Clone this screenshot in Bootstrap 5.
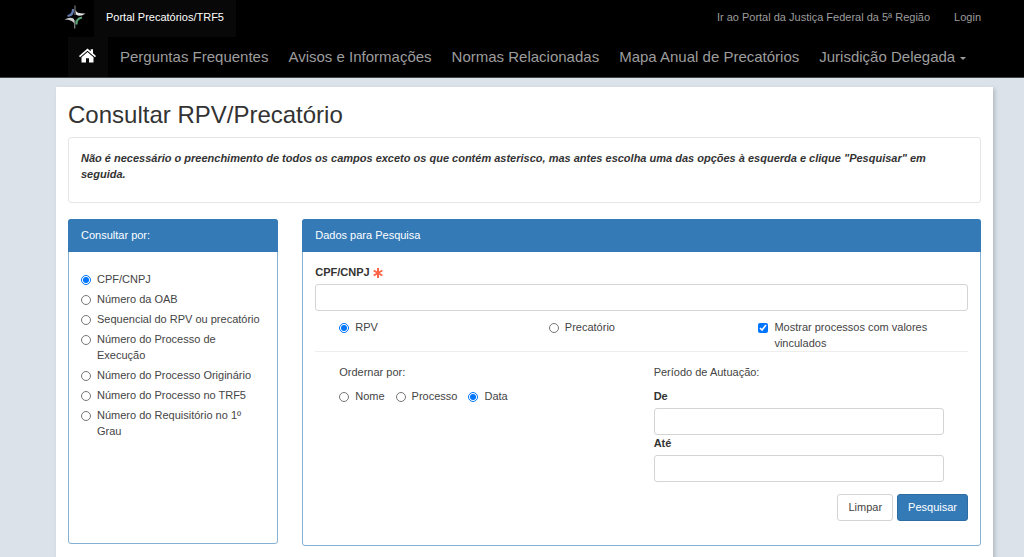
<!DOCTYPE html>
<html lang="pt-br">
<head>
<meta charset="utf-8">
<meta name="viewport" content="width=device-width, initial-scale=1">
<title>Portal Precatórios/TRF5</title>
<link href="https://cdn.jsdelivr.net/npm/bootstrap@5.3.0/dist/css/bootstrap.min.css" rel="stylesheet">
<style>
  body { font-family: "Liberation Sans", Arial, sans-serif; font-size: 11px; line-height: 16px; color: #444; background: #dbe2e9; }
  .page-frame { margin-left: 56px; margin-right: 31px; }
  .site-header { background: #000; border-bottom: 1px solid #444; }
  .site-header a { color: #9d9d9d; text-decoration: none; display: block; padding: 0 12px; white-space: nowrap; }
  .site-header a:hover, .site-header a.current { color: #fff; }
  .site-header a.current { background: #080808; }
  .top-links a { line-height: 34px; padding-bottom: 3px; }
  .top-links .brand-link { padding: 5px 8px 0; }
  .top-links svg { display: block; }
  .main-links { padding-left: 12px; }
  .main-links a { font-size: 15px; line-height: 40px; padding: 0 10px; }
  .main-links a.current { padding: 0 12px 0 11px; margin-right: 2px; }
  .main-links svg { display: block; margin: 10px 0; }
  .main-links .dropdown-toggle::after { border-top-width: 3px; border-left-width: 3px; border-right-width: 3px; vertical-align: 2px; margin-left: 5px; }
  .sheet { background: #fff; box-shadow: 2px 2px 4px #b4bac2; margin-top: 9px; padding: 11px 12px 16px; }
  h1 { font-size: 24px; line-height: 34px; margin: 0 0 5px; color: #333; }
  .notice { border: 1px solid #e3e5e7; border-radius: 3px; padding: 12px 12px 20px; margin-bottom: 16px; color: #333; }
  .panel-box { border: 1px solid #86afd4; border-radius: 3px; background: #fff; }
  .panel-title { background: #337ab7; color: #fff; margin: -1px -1px 0; padding: 8px 13px 9px; border-radius: 3px 3px 0 0; font-size: 11px; line-height: 16px; }
  .side-body { padding: 19px 12px; min-height: 291px; }
  .form-body { padding: 12px 12px 24px; }
  .choice { display: flex; align-items: flex-start; gap: 6px; margin-bottom: 4px; }
  .choice input { width: 10px; height: 10px; margin: 4px 0 0; flex: none; accent-color: #0075ff; }
  .order-choices { gap: 11px; }
  .field { display: block; width: 100%; height: 27px; border: 1px solid #d4d4d4; border-radius: 3px; padding: 4px 8px; }
  .form-label { font-size: 11px; font-weight: bold; color: #333; margin: 0; }
  .rule { border-top: 1px solid #eee; margin-bottom: 12px; }
  .btn { font-size: 11px; line-height: 17px; padding: 4px 10px; border-radius: 3px; }
  .btn-clear { border-color: #d4d4d4; color: #444; background: #fff; }
  .btn-search { background: #337ab7; border-color: #2e6da4; color: #fff; }
</style>
</head>
<body>
<header class="site-header">
  <div class="page-frame">
    <nav class="top-links d-flex" aria-label="Portal">
      <a class="brand-link" href="#" aria-label="TRF5">
        <svg width="22" height="24" viewBox="0 0 22 24" fill="none" aria-hidden="true">
          <path d="M11 .5V10" stroke="#777" stroke-width="1.2"/>
          <path d="M9 4Q9.500 10 3.500 11" stroke="#6078ad" stroke-width="2.2"/>
          <path d="M11.500 5Q12.500 9 21.500 8.500Q16 12.500 12 9.500Z" fill="#e5e5e5"/>
          <path d="M.5 14.500Q6.500 11.500 10 14L10.500 19Q8.500 14.500 .5 14.500Z" fill="#cecece"/>
          <path d="M12.500 19.500Q12 13.500 18 12.500" stroke="#58a577" stroke-width="2.200"/>
          <path d="M10.700 15V23.500" stroke="#888" stroke-width="1.200"/>
        </svg>
      </a>
      <a class="current" href="#">Portal Precatórios/TRF5</a>
      <a class="ms-auto" href="#">Ir ao Portal da Justiça Federal da 5ª Região</a>
      <a href="#">Login</a>
    </nav>
    <nav class="main-links d-flex" aria-label="Principal">
      <a class="current" href="#" aria-label="Início">
        <svg width="17" height="19" viewBox="0 0 17 19" fill="#fff" aria-hidden="true">
          <path d="M8.500 1.500L0 9L1 10.200L8.500 3.700L16 10.200L17 9L14 6.200V2.200H11.700V4.300Z"/>
          <path d="M8.500 5L2.500 10.300V15.500H7V11.300H10V15.500H14.500V10.300Z"/>
        </svg>
      </a>
      <a href="#">Perguntas Frequentes</a>
      <a href="#">Avisos e Informações</a>
      <a href="#">Normas Relacionadas</a>
      <a href="#">Mapa Anual de Precatórios</a>
      <a class="dropdown-toggle" href="#" role="button" data-bs-toggle="dropdown">Jurisdição Delegada</a>
    </nav>
  </div>
</header>
<main class="page-frame sheet">
  <h1>Consultar RPV/Precatório</h1>
  <div class="notice fw-bold fst-italic">Não é necessário o preenchimento de todos os campos exceto os que contém asterisco, mas antes escolha uma das opções à esquerda e clique "Pesquisar" em seguida.</div>
  <form class="row align-items-start">
    <div class="col-3">
      <section class="panel-box">
        <h2 class="panel-title fw-normal">Consultar por:</h2>
        <div class="side-body">
          <label class="choice"><input type="radio" name="tipo" checked>CPF/CNPJ</label>
          <label class="choice"><input type="radio" name="tipo">Número da OAB</label>
          <label class="choice"><input type="radio" name="tipo">Sequencial do RPV ou precatório</label>
          <label class="choice"><input type="radio" name="tipo">Número do Processo de Execução</label>
          <label class="choice"><input type="radio" name="tipo">Número do Processo Originário</label>
          <label class="choice"><input type="radio" name="tipo">Número do Processo no TRF5</label>
          <label class="choice"><input type="radio" name="tipo">Número do Requisitório no 1º Grau</label>
        </div>
      </section>
    </div>
    <div class="col-9">
      <section class="panel-box">
        <h2 class="panel-title fw-normal">Dados para Pesquisa</h2>
        <div class="form-body">
          <label class="form-label d-block" for="cpf">CPF/CNPJ
            <svg width="10" height="10" viewBox="0 0 10 10" stroke="#ff6347" stroke-width="2" aria-hidden="true"><path d="M5 0V10M.7 2.500L9.300 7.500M9.300 2.500L.7 7.500"/></svg>
          </label>
          <input class="field mt-1" id="cpf" type="text">
          <div class="px-4 pt-2">
            <div class="row">
              <div class="col-4"><label class="choice mb-0"><input type="radio" name="req" checked>RPV</label></div>
              <div class="col-4"><label class="choice mb-0"><input type="radio" name="req">Precatório</label></div>
              <div class="col-4"><label class="choice mb-0"><input type="checkbox" checked>Mostrar processos com valores vinculados</label></div>
            </div>
          </div>
          <div class="rule"></div>
          <div class="px-4">
            <div class="row">
              <div class="col-6">
                <div class="mb-2">Ordernar por:</div>
                <div class="d-flex order-choices">
                  <label class="choice"><input type="radio" name="ordem">Nome</label>
                  <label class="choice"><input type="radio" name="ordem">Processo</label>
                  <label class="choice"><input type="radio" name="ordem" checked>Data</label>
                </div>
              </div>
              <div class="col-6">
                <div class="mb-2">Período de Autuação:</div>
                <label class="form-label d-block" for="de">De</label>
                <input class="field mt-1" id="de" type="text">
                <label class="form-label d-block" for="ate">Até</label>
                <input class="field mt-1" id="ate" type="text">
              </div>
            </div>
          </div>
          <div class="d-flex justify-content-end gap-1 mt-2 pt-1">
            <button class="btn btn-clear" type="reset">Limpar</button>
            <button class="btn btn-search" type="button">Pesquisar</button>
          </div>
        </div>
      </section>
    </div>
  </form>
</main>
<script src="https://cdn.jsdelivr.net/npm/bootstrap@5.3.0/dist/js/bootstrap.bundle.min.js"></script>
</body>
</html>
